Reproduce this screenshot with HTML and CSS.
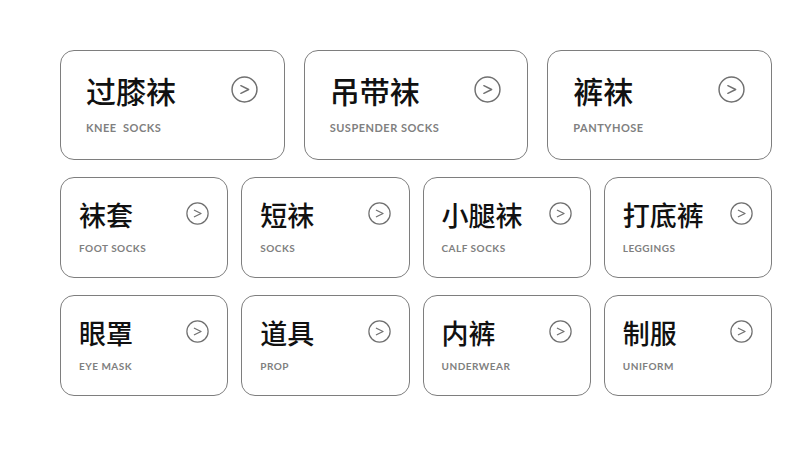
FILE: index.html
```html
<!DOCTYPE html>
<html lang="zh-CN">
<head>
  <meta charset="UTF-8">
  <meta name="viewport" content="width=device-width, initial-scale=1.0">
  <title>分类</title>
  <link rel="stylesheet" href="styles.css">
</head>
<body>
  <div class="categories">
    <!-- Large row -->
    <div class="row row-large">
      <a class="card" href="#">
        <div class="card-top">
          <span class="title">过膝袜</span>
          <svg class="arrow" viewBox="0 0 26 26"><circle cx="13" cy="13" r="12"/><path d="M9.5 9.3 L17 13 L9.5 16.7"/></svg>
        </div>
        <span class="sub">KNEE&nbsp; SOCKS</span>
      </a>
      <a class="card" href="#">
        <div class="card-top">
          <span class="title">吊带袜</span>
          <svg class="arrow" viewBox="0 0 26 26"><circle cx="13" cy="13" r="12"/><path d="M9.5 9.3 L17 13 L9.5 16.7"/></svg>
        </div>
        <span class="sub">SUSPENDER SOCKS</span>
      </a>
      <a class="card" href="#">
        <div class="card-top">
          <span class="title">裤袜</span>
          <svg class="arrow" viewBox="0 0 26 26"><circle cx="13" cy="13" r="12"/><path d="M9.5 9.3 L17 13 L9.5 16.7"/></svg>
        </div>
        <span class="sub">PANTYHOSE</span>
      </a>
    </div>

    <!-- Small rows -->
    <div class="row row-small">
      <a class="card" href="#">
        <div class="card-top">
          <span class="title">袜套</span>
          <svg class="arrow" viewBox="0 0 26 26"><circle cx="13" cy="13" r="12"/><path d="M9.5 9.3 L17 13 L9.5 16.7"/></svg>
        </div>
        <span class="sub">FOOT SOCKS</span>
      </a>
      <a class="card" href="#">
        <div class="card-top">
          <span class="title">短袜</span>
          <svg class="arrow" viewBox="0 0 26 26"><circle cx="13" cy="13" r="12"/><path d="M9.5 9.3 L17 13 L9.5 16.7"/></svg>
        </div>
        <span class="sub">SOCKS</span>
      </a>
      <a class="card" href="#">
        <div class="card-top">
          <span class="title">小腿袜</span>
          <svg class="arrow" viewBox="0 0 26 26"><circle cx="13" cy="13" r="12"/><path d="M9.5 9.3 L17 13 L9.5 16.7"/></svg>
        </div>
        <span class="sub">CALF SOCKS</span>
      </a>
      <a class="card" href="#">
        <div class="card-top">
          <span class="title">打底裤</span>
          <svg class="arrow" viewBox="0 0 26 26"><circle cx="13" cy="13" r="12"/><path d="M9.5 9.3 L17 13 L9.5 16.7"/></svg>
        </div>
        <span class="sub">LEGGINGS</span>
      </a>
    </div>

    <div class="row row-small">
      <a class="card" href="#">
        <div class="card-top">
          <span class="title">眼罩</span>
          <svg class="arrow" viewBox="0 0 26 26"><circle cx="13" cy="13" r="12"/><path d="M9.5 9.3 L17 13 L9.5 16.7"/></svg>
        </div>
        <span class="sub">EYE MASK</span>
      </a>
      <a class="card" href="#">
        <div class="card-top">
          <span class="title">道具</span>
          <svg class="arrow" viewBox="0 0 26 26"><circle cx="13" cy="13" r="12"/><path d="M9.5 9.3 L17 13 L9.5 16.7"/></svg>
        </div>
        <span class="sub">PROP</span>
      </a>
      <a class="card" href="#">
        <div class="card-top">
          <span class="title">内裤</span>
          <svg class="arrow" viewBox="0 0 26 26"><circle cx="13" cy="13" r="12"/><path d="M9.5 9.3 L17 13 L9.5 16.7"/></svg>
        </div>
        <span class="sub">UNDERWEAR</span>
      </a>
      <a class="card" href="#">
        <div class="card-top">
          <span class="title">制服</span>
          <svg class="arrow" viewBox="0 0 26 26"><circle cx="13" cy="13" r="12"/><path d="M9.5 9.3 L17 13 L9.5 16.7"/></svg>
        </div>
        <span class="sub">UNIFORM</span>
      </a>
    </div>
  </div>
</body>
</html>
```

FILE: styles.css
```css
body {
  margin: 0;
  background: #fff;
  font-family: "Noto Sans CJK SC", "Noto Sans", sans-serif;
}

.categories {
  width: 712px;
  margin: 50px 0 0 60px;
  display: flex;
  flex-direction: column;
  gap: 17px;
}

.row {
  display: grid;
}

.row-large {
  grid-template-columns: repeat(3, 1fr);
  gap: 19px;
  height: 110px;
}

.row-small {
  grid-template-columns: repeat(4, 1fr);
  gap: 13px;
  height: 101px;
}

.card {
  display: flex;
  flex-direction: column;
  box-sizing: border-box;
  border: 1.6px solid #7e7e7e;
  border-radius: 14px;
  text-decoration: none;
  color: #111;
}

.card-top {
  display: flex;
  align-items: center;
  justify-content: space-between;
}

.title {
  line-height: 1;
  font-weight: 500;
}

.sub {
  font-family: Lato, "Open Sans", sans-serif;
  font-weight: 700;
  color: #808080;
  letter-spacing: 0.5px;
}

.arrow {
  fill: none;
  stroke: #707070;
  stroke-width: 1.4;
  stroke-linecap: round;
  stroke-linejoin: round;
}

/* Large cards */
.row-large .card {
  padding: 24px 26px 0 25px;
}

.row-large .title {
  font-size: 30px;
}

.row-large .arrow {
  width: 27px;
  height: 27px;
  margin-top: -2px;
}

.row-large .sub {
  font-size: 11px;
  line-height: 14px;
  margin-top: 16px;
}

/* Small cards */
.row-small .card {
  padding: 23px 18px 0 18px;
}

.row-small .title {
  font-size: 27px;
}

.row-small .arrow {
  width: 23px;
  height: 23px;
  margin-top: -2px;
}

.row-small .sub {
  font-size: 10px;
  line-height: 12px;
  margin-top: 14px;
}
```
